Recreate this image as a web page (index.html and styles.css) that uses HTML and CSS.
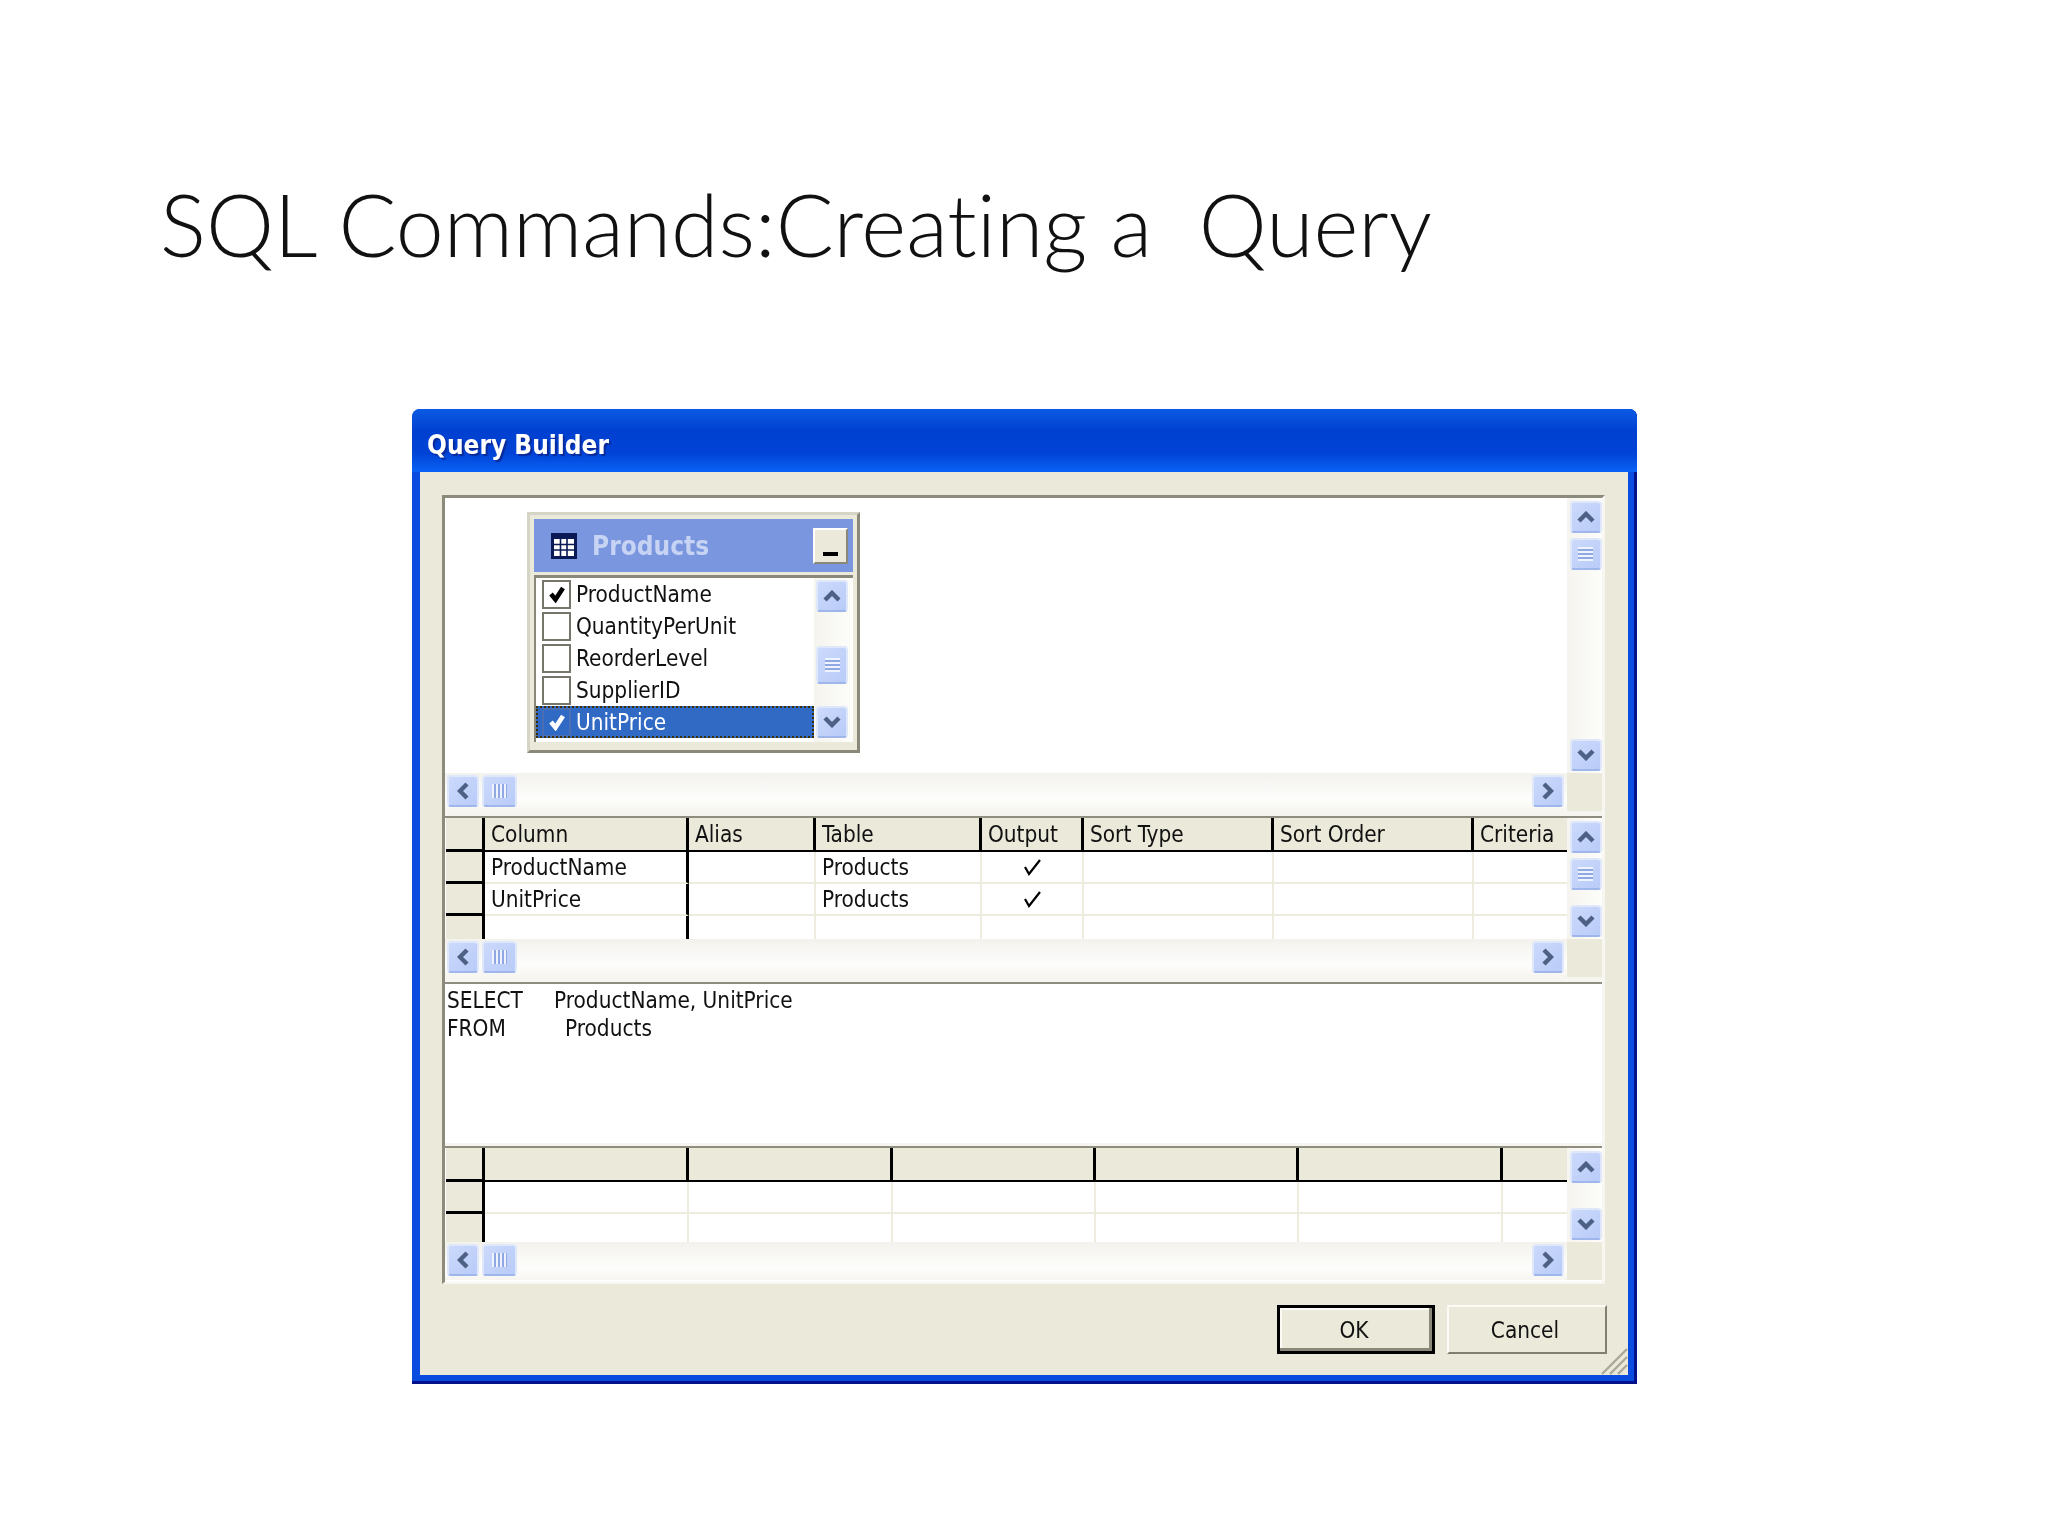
FILE: index.html
```html
<!DOCTYPE html>
<html lang="en">
<head>
  <meta charset="UTF-8">
  <title>SQL Commands:Creating a Query</title>
  <link rel="stylesheet" href="styles.css">
</head>
<body>
  <svg class="sprite" width="0" height="0">
    <symbol id="up" viewBox="0 0 18 12"><path d="M2 10 L9 3 L16 10" fill="none" stroke="#4d6185" stroke-width="4.4"/></symbol>
    <symbol id="down" viewBox="0 0 18 12"><path d="M2 2 L9 9 L16 2" fill="none" stroke="#4d6185" stroke-width="4.4"/></symbol>
    <symbol id="left" viewBox="0 0 12 18"><path d="M10 2 L3 9 L10 16" fill="none" stroke="#4d6185" stroke-width="4.4"/></symbol>
    <symbol id="right" viewBox="0 0 12 18"><path d="M2 2 L9 9 L2 16" fill="none" stroke="#4d6185" stroke-width="4.4"/></symbol>
    <symbol id="check" viewBox="0 0 18 18"><path d="M3 9 L7.5 14.5 L15 3" fill="none" stroke="currentColor" stroke-width="4.6"/></symbol>
    <symbol id="tick" viewBox="0 0 20 20"><path d="M3 10 L7 17 L18 3" fill="none" stroke="currentColor" stroke-width="2.2"/></symbol>
  </svg>

  <h1 class="slide-title">SQL Commands:Creating a&nbsp; Query</h1>

  <div class="window">
    <div class="titlebar">Query Builder</div>
    <div class="client">
      <div class="panel">

        <div class="pane pane-diagram">
          <div class="pane-main diagram">
            <div class="table-box">
              <div class="table-head">
                <svg class="table-icon" viewBox="0 0 26 26">
                  <rect width="26" height="26" fill="#0a1a55"/>
                  <rect x="3" y="6" width="20" height="17" fill="#fff"/>
                  <path d="M3 11.5H23M3 17H23M9.5 6V23M16 6V23" stroke="#0a1a55" stroke-width="1.6"/>
                </svg>
                <span class="table-name">Products</span>
                <span class="min-btn"></span>
              </div>
              <div class="table-body">
                <ul class="field-list">
                  <li class="field"><span class="box"><svg class="box-check"><use href="#check"/></svg></span>ProductName</li>
                  <li class="field"><span class="box"></span>QuantityPerUnit</li>
                  <li class="field"><span class="box"></span>ReorderLevel</li>
                  <li class="field"><span class="box"></span>SupplierID</li>
                  <li class="field selected"><span class="box"><svg class="box-check"><use href="#check"/></svg></span>UnitPrice</li>
                </ul>
                <div class="vscroll list-scroll">
                  <span class="sb-btn"><svg class="chev-v"><use href="#up"/></svg></span>
                  <span class="sb-btn thumb-list"><span class="grip-h"></span></span>
                  <span class="sb-btn"><svg class="chev-v"><use href="#down"/></svg></span>
                </div>
              </div>
            </div>
          </div>
          <div class="vscroll">
            <span class="sb-btn"><svg class="chev-v"><use href="#up"/></svg></span>
            <span class="sb-btn thumb-top"><span class="grip-h"></span></span>
            <span class="sb-btn"><svg class="chev-v"><use href="#down"/></svg></span>
          </div>
          <div class="hscroll">
            <span class="sb-btn"><svg class="chev-h"><use href="#left"/></svg></span>
            <span class="sb-btn thumb-h"><span class="grip-v"></span></span>
            <span class="sb-btn push-right"><svg class="chev-h"><use href="#right"/></svg></span>
          </div>
          <div class="corner"></div>
        </div>

        <div class="sep"></div>

        <div class="pane pane-grid">
          <div class="pane-main grid grid-columns">
            <div class="cell head selector"></div>
            <div class="cell head">Column</div>
            <div class="cell head">Alias</div>
            <div class="cell head">Table</div>
            <div class="cell head">Output</div>
            <div class="cell head">Sort Type</div>
            <div class="cell head">Sort Order</div>
            <div class="cell head last">Criteria</div>

            <div class="cell selector"></div>
            <div class="cell hard">ProductName</div>
            <div class="cell"></div>
            <div class="cell">Products</div>
            <div class="cell tick-cell"><svg class="tick"><use href="#tick"/></svg></div>
            <div class="cell"></div>
            <div class="cell"></div>
            <div class="cell last"></div>

            <div class="cell selector"></div>
            <div class="cell hard">UnitPrice</div>
            <div class="cell"></div>
            <div class="cell">Products</div>
            <div class="cell tick-cell"><svg class="tick"><use href="#tick"/></svg></div>
            <div class="cell"></div>
            <div class="cell"></div>
            <div class="cell last"></div>

            <div class="cell selector end"></div>
            <div class="cell hard end"></div>
            <div class="cell end"></div>
            <div class="cell end"></div>
            <div class="cell end"></div>
            <div class="cell end"></div>
            <div class="cell end"></div>
            <div class="cell last end"></div>
          </div>
          <div class="vscroll">
            <span class="sb-btn"><svg class="chev-v"><use href="#up"/></svg></span>
            <span class="sb-btn thumb-top"><span class="grip-h"></span></span>
            <span class="sb-btn"><svg class="chev-v"><use href="#down"/></svg></span>
          </div>
          <div class="hscroll">
            <span class="sb-btn"><svg class="chev-h"><use href="#left"/></svg></span>
            <span class="sb-btn thumb-h"><span class="grip-v"></span></span>
            <span class="sb-btn push-right"><svg class="chev-h"><use href="#right"/></svg></span>
          </div>
          <div class="corner"></div>
        </div>

        <div class="sep sep-sql"></div>

        <div class="sql">
          <div class="sql-line"><span class="kw kw-select">SELECT</span>ProductName, UnitPrice</div>
          <div class="sql-line"><span class="kw kw-from">FROM</span>Products</div>
        </div>

        <div class="sep sep-results"></div>

        <div class="pane pane-results">
          <div class="pane-main grid grid-results">
            <div class="cell head selector"></div>
            <div class="cell head"></div>
            <div class="cell head"></div>
            <div class="cell head"></div>
            <div class="cell head"></div>
            <div class="cell head"></div>
            <div class="cell head last"></div>

            <div class="cell selector"></div>
            <div class="cell"></div>
            <div class="cell"></div>
            <div class="cell"></div>
            <div class="cell"></div>
            <div class="cell"></div>
            <div class="cell last"></div>

            <div class="cell selector end"></div>
            <div class="cell end"></div>
            <div class="cell end"></div>
            <div class="cell end"></div>
            <div class="cell end"></div>
            <div class="cell end"></div>
            <div class="cell last end"></div>
          </div>
          <div class="vscroll">
            <span class="sb-btn"><svg class="chev-v"><use href="#up"/></svg></span>
            <span class="sb-btn"><svg class="chev-v"><use href="#down"/></svg></span>
          </div>
          <div class="hscroll">
            <span class="sb-btn"><svg class="chev-h"><use href="#left"/></svg></span>
            <span class="sb-btn thumb-h"><span class="grip-v"></span></span>
            <span class="sb-btn push-right"><svg class="chev-h"><use href="#right"/></svg></span>
          </div>
          <div class="corner"></div>
        </div>
      </div>

      <div class="actions">
        <button class="btn btn-default">OK</button>
        <button class="btn">Cancel</button>
      </div>

      <svg class="resize-grip" viewBox="0 0 28 28">
        <path d="M2 27L27 2M10 27L27 10M18 27L27 18" stroke="#a9a899" stroke-width="2.4"/>
      </svg>
    </div>
  </div>
</body>
</html>
```

FILE: styles.css
```css
body {
  margin: 0;
  width: 2048px;
  height: 1536px;
  overflow: hidden;
  background: #fff;
  font-family: "DejaVu Sans Condensed", "DejaVu Sans", sans-serif;
  font-stretch: condensed;
  font-size: 22.4px;
  color: #111;
}
.sprite { position: absolute; }

.slide-title {
  margin: 0;
  padding: 171px 0 0 160px;
  height: 237px;
  box-sizing: border-box;
  font-family: Lato, "Open Sans", sans-serif;
  font-stretch: normal;
  font-variant-ligatures: none;
  font-weight: 300;
  font-size: 86px;
  line-height: 106px;
  color: #111;
  white-space: nowrap;
}

.window {
  box-sizing: border-box;
  width: 1225px;
  height: 975px;
  margin: 172px 0 0 412px;
  border-radius: 8px 8px 0 0;
  background: #0a4be0;
  display: flex;
  flex-direction: column;
  box-shadow: inset 0 -3px 0 #00118a, inset -3px 0 0 #00118a;
  filter: blur(0.45px);
}
.titlebar {
  height: 63px;
  padding: 0 15px;
  line-height: 72px;
  font-size: 26px;
  font-weight: bold;
  color: #fff;
  text-shadow: 2px 2px 1px #0a2a9a;
  background: linear-gradient(#0a5ae6 0, #0a55e0 8%, #0040d0 35%, #0043d6 70%, #0a62f6 100%);
  border-radius: 8px 8px 0 0;
}
.client {
  position: relative;
  flex: 1;
  margin: 0 9px 9px 8px;
  padding: 23px 0 0 22px;
  background: #ebe9d9;
}

.panel {
  box-sizing: border-box;
  width: 1163px;
  height: 789px;
  border-top: 3px solid #8d8b7c;
  border-left: 3px solid #8d8b7c;
  border-right: 3px solid #f7f6f0;
  border-bottom: 2px solid #f7f6f0;
  background: #fff;
}

.pane {
  display: grid;
  grid-template-columns: 1122px 35px;
  grid-template-rows: auto 38px;
}
.pane-diagram { grid-template-rows: 275px 38px; }
.pane-main { min-width: 0; }
.diagram { position: relative; }

.sep {
  height: 7px;
  background: #f6f5ef;
  border-bottom: 2px solid #8f8d7f;
  box-sizing: border-box;
}
.sep-sql { height: 7px; }
.sep-results { height: 5px; }

/* scrollbars */
.vscroll {
  display: flex;
  flex-direction: column;
  justify-content: space-between;
  align-items: center;
  padding: 3px 0 2px 2px;
  background: linear-gradient(to right, #f5f4ee, #fdfdfb);
}
.pane-diagram .vscroll { justify-content: flex-start; }
.pane-diagram .vscroll .sb-btn:last-child { margin-top: auto; }
.pane-grid .vscroll { justify-content: flex-start; }
.pane-grid .vscroll .sb-btn:last-child { margin-top: auto; }
.hscroll {
  display: flex;
  align-items: center;
  gap: 3px;
  padding: 0 2px 2px;
  background: linear-gradient(#f3f2ed, #fdfdfc 70%, #f6f5f0);
}
.corner { background: #ebe9d9; }
.sb-btn {
  box-sizing: border-box;
  flex: none;
  width: 32px;
  height: 32px;
  display: flex;
  align-items: center;
  justify-content: center;
  border: 2px solid #dfe7fb;
  border-bottom-color: #9fb6ec;
  border-radius: 4px;
  background: linear-gradient(135deg, #cbd9fb, #b9cbf8);
}
.vscroll .thumb-top { margin-top: 5px; }
.push-right { margin-left: auto; margin-right: 1px; }
.thumb-h { width: 35px; }
.chev-v { width: 18px; height: 12px; }
.chev-h { width: 12px; height: 18px; }
.grip-h {
  width: 15px;
  height: 14px;
  background: repeating-linear-gradient(#eef3fe 0 2px, #8fa8e4 2px 4px);
}
.grip-v {
  width: 15px;
  height: 14px;
  background: repeating-linear-gradient(to right, #eef3fe 0 2px, #8fa8e4 2px 4px);
}

/* table window */
.table-box {
  position: absolute;
  left: 82px;
  top: 14px;
  box-sizing: border-box;
  width: 333px;
  height: 241px;
  padding: 4px;
  border: 3px solid;
  border-color: #d6d4c6 #8a8979 #8a8979 #d6d4c6;
  background: #ebe9d9;
}
.table-head {
  height: 53px;
  display: flex;
  align-items: center;
  padding: 0 5px 0 17px;
  background: #7a96df;
}
.table-icon { width: 26px; height: 26px; }
.table-name {
  margin-left: 15px;
  font-size: 26px;
  font-weight: bold;
  color: #c6d3f3;
}
.min-btn {
  position: relative;
  box-sizing: border-box;
  width: 35px;
  height: 36px;
  margin-left: auto;
  background: #ebe9d9;
  border: 2px solid;
  border-color: #fff #8a8979 #8a8979 #fff;
}
.min-btn::after {
  content: "";
  position: absolute;
  left: 8px;
  bottom: 6px;
  width: 15px;
  height: 4px;
  background: #000;
}
.table-body {
  display: flex;
  height: 164px;
  margin-top: 3px;
  border-top: 3px solid #8a8979;
  border-left: 2px solid #8a8979;
  background: #fff;
}
.field-list {
  flex: 1;
  margin: 0;
  padding: 0;
  list-style: none;
}
.field {
  display: flex;
  align-items: center;
  height: 32px;
  padding-left: 6px;
}
.box {
  box-sizing: border-box;
  width: 29px;
  height: 29px;
  margin-right: 5px;
  display: flex;
  align-items: center;
  justify-content: center;
  border: 2px solid #77766a;
  background: #fff;
}
.box-check { width: 18px; height: 18px; color: #000; }
.field.selected {
  background: #316ac5;
  color: #fff;
  outline: 2px dotted #3a2f00;
  outline-offset: -2px;
}
.selected .box { background: #316ac5; border-color: #4a6fb4; }
.selected .box-check { color: #fff; }
.list-scroll {
  width: 39px;
  padding: 2px 5px 4px 2px;
  box-sizing: border-box;
  flex: none;
  background: linear-gradient(to right, #f5f4ee, #fdfdfb);
}
.list-scroll .thumb-list { height: 38px; margin-top: 34px; }

/* grids */
.grid { display: grid; padding-left: 1px; }
.grid-columns {
  grid-template-columns: 39px 204px 127px 166px 102px 190px 200px 93px;
  grid-template-rows: 34px 32px 32px 23px;
}
.grid-results {
  grid-template-columns: 39px 204px 204px 203px 203px 204px 64px;
  grid-template-rows: 34px 32px 28px;
}
.cell {
  box-sizing: border-box;
  padding-left: 6px;
  line-height: 30px;
  border-right: 2px solid #eeecde;
  border-bottom: 2px solid #eeecde;
  white-space: nowrap;
  overflow: hidden;
}
.cell.head { line-height: 32px; }
.cell.end { border-bottom: 0; }
.cell.last { border-right: 0; }
.cell.hard { border-right: 3px solid #000; }
.cell.head {
  background: #ebe9d9;
  border-right: 3px solid #000;
  border-bottom: 2px solid #000;
}
.cell.head.last { border-right: 0; }
.cell.selector {
  background: #ebe9d9;
  border-right: 3px solid #000;
  border-bottom: 3px solid #000;
}
.cell.selector.end { border-bottom: 0; }
.tick-cell {
  display: flex;
  align-items: center;
  justify-content: center;
  padding: 0;
}
.tick { width: 20px; height: 20px; color: #000; }

/* sql pane */
.sql {
  box-sizing: border-box;
  height: 159px;
  padding: 2px 0 0 2px;
  line-height: 28px;
}
.sql-line { display: flex; white-space: nowrap; }
.kw-select { width: 107px; }
.kw-from { width: 118px; }

/* footer */
.actions {
  display: flex;
  justify-content: flex-end;
  gap: 12px;
  width: 1165px;
  margin-top: 21px;
}
.btn {
  box-sizing: border-box;
  width: 160px;
  height: 49px;
  padding: 0 4px 0 0;
  font: inherit;
  font-stretch: condensed;
  color: #111;
  background: #ebe9d9;
  border: 2px solid;
  border-color: #fbfaf4 #807f70 #807f70 #fbfaf4;
}
.btn-default {
  width: 158px;
  border: 3px solid #000;
  box-shadow: inset -3px -3px 0 #8a8979, inset 2px 2px 0 #fbfaf4;
}
.resize-grip {
  position: absolute;
  right: 0;
  bottom: 0;
  width: 28px;
  height: 28px;
}
```
